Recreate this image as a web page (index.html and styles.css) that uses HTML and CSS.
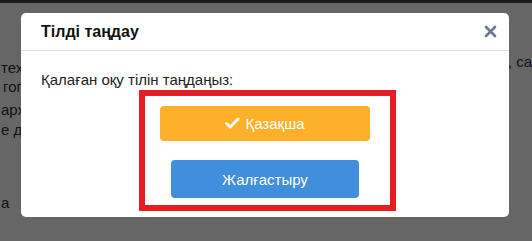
FILE: index.html
```html
<!DOCTYPE html>
<html lang="kk">
<head>
<meta charset="utf-8">
<title>Тілді таңдау</title>
<link rel="stylesheet" href="styles.css">
</head>
<body>
<div class="page">
  <div class="topbar"></div>
  <div class="content">
    <div class="line line-a"><span class="frag frag-low">техн</span><span class="frag">, са</span></div>
    <div class="line"><span class="frag frag-in">гоп</span></div>
    <div class="line line-gap"><span class="frag">арж</span></div>
    <div class="line"><span class="frag">е да</span></div>
    <div class="line line-far"><span class="frag">а &nbsp; б</span></div>
  </div>
</div>
<div class="overlay">
  <div class="modal">
    <div class="modal-header">
      <h4 class="modal-title">Тілді таңдау</h4>
      <button class="close" aria-label="Close">
        <svg width="13" height="13" viewBox="0 0 13 13"><path d="M2 2 L11 11 M11 2 L2 11" stroke="#6a7890" stroke-width="2.6" stroke-linecap="round"/></svg>
      </button>
    </div>
    <div class="modal-body">
      <p class="prompt">Қалаған оқу тілін таңдаңыз:</p>
      <div class="highlight">
        <button class="btn btn-lang">
          <svg class="check" width="15" height="12" viewBox="0 0 15 12"><path d="M1.5 6.5 L5.2 10 L13 2" fill="none" stroke="#fff" stroke-width="2.8" stroke-linecap="round" stroke-linejoin="round"/></svg>
          Қазақша
        </button>
        <button class="btn btn-go">Жалғастыру</button>
      </div>
    </div>
  </div>
</div>
</body>
</html>
```
FILE: styles.css
```css
html, body {
  margin: 0;
  padding: 0;
}
body {
  width: 532px;
  height: 241px;
  overflow: hidden;
  font-family: "Liberation Sans", Arial, sans-serif;
  background: #fff;
  position: relative;
}
.page {
  height: 241px;
}
.topbar {
  height: 3px;
  background: #444;
}
.content {
  padding-top: 49px;
  font-size: 15px;
  color: #333;
}
.line {
  display: flex;
  justify-content: space-between;
  align-items: flex-start;
  height: 20px;
  line-height: 20px;
  padding-left: 1px;
}
.line-a {
  height: 25px;
}
.frag-low {
  margin-top: 6px;
}
.frag-in {
  padding-left: 2px;
}
.line-gap {
  margin-top: 3px;
}
.line-far {
  margin-top: 53px;
}
.frag {
  white-space: nowrap;
}
.overlay {
  position: absolute;
  inset: 0;
  background: rgba(0, 0, 0, 0.6);
  padding: 13px 0 0 21px;
}
.modal {
  width: 488px;
  height: 204px;
  background: #fff;
  border-radius: 5px;
  box-sizing: border-box;
  display: flex;
  flex-direction: column;
}
.modal-header {
  height: 38px;
  box-sizing: border-box;
  border-bottom: 1px solid #e2e2e2;
  display: flex;
  align-items: center;
  justify-content: space-between;
  padding: 0 12px 0 20px;
}
.modal-title {
  margin: 0;
  font-size: 16px;
  font-weight: bold;
  color: #111;
}
.close {
  border: 0;
  background: none;
  padding: 0;
  display: flex;
  margin-top: -1px;
}
.modal-body {
  padding: 19px 20px 0 20px;
}
.prompt {
  margin: 0;
  font-size: 15px;
  line-height: 20px;
  color: #222;
}
.highlight {
  margin-left: 98px;
  width: 257px;
  height: 121px;
  box-sizing: border-box;
  border: 6px solid #e61e24;
  padding: 10px 20px 0 15px;
  display: flex;
  flex-direction: column;
  align-items: center;
  gap: 19px;
}
.btn {
  border: 0;
  border-radius: 4px;
  color: #fff;
  font-family: "Liberation Sans", Arial, sans-serif;
  font-size: 15px;
  display: flex;
  align-items: center;
  justify-content: center;
  gap: 5px;
}
.btn-lang {
  width: 210px;
  height: 35px;
  background: #fdb12b;
  padding-top: 1px;
}
.btn-go {
  width: 188px;
  height: 38px;
  background: #3f8fdd;
}
.check {
  margin-top: -2px;
}
```
